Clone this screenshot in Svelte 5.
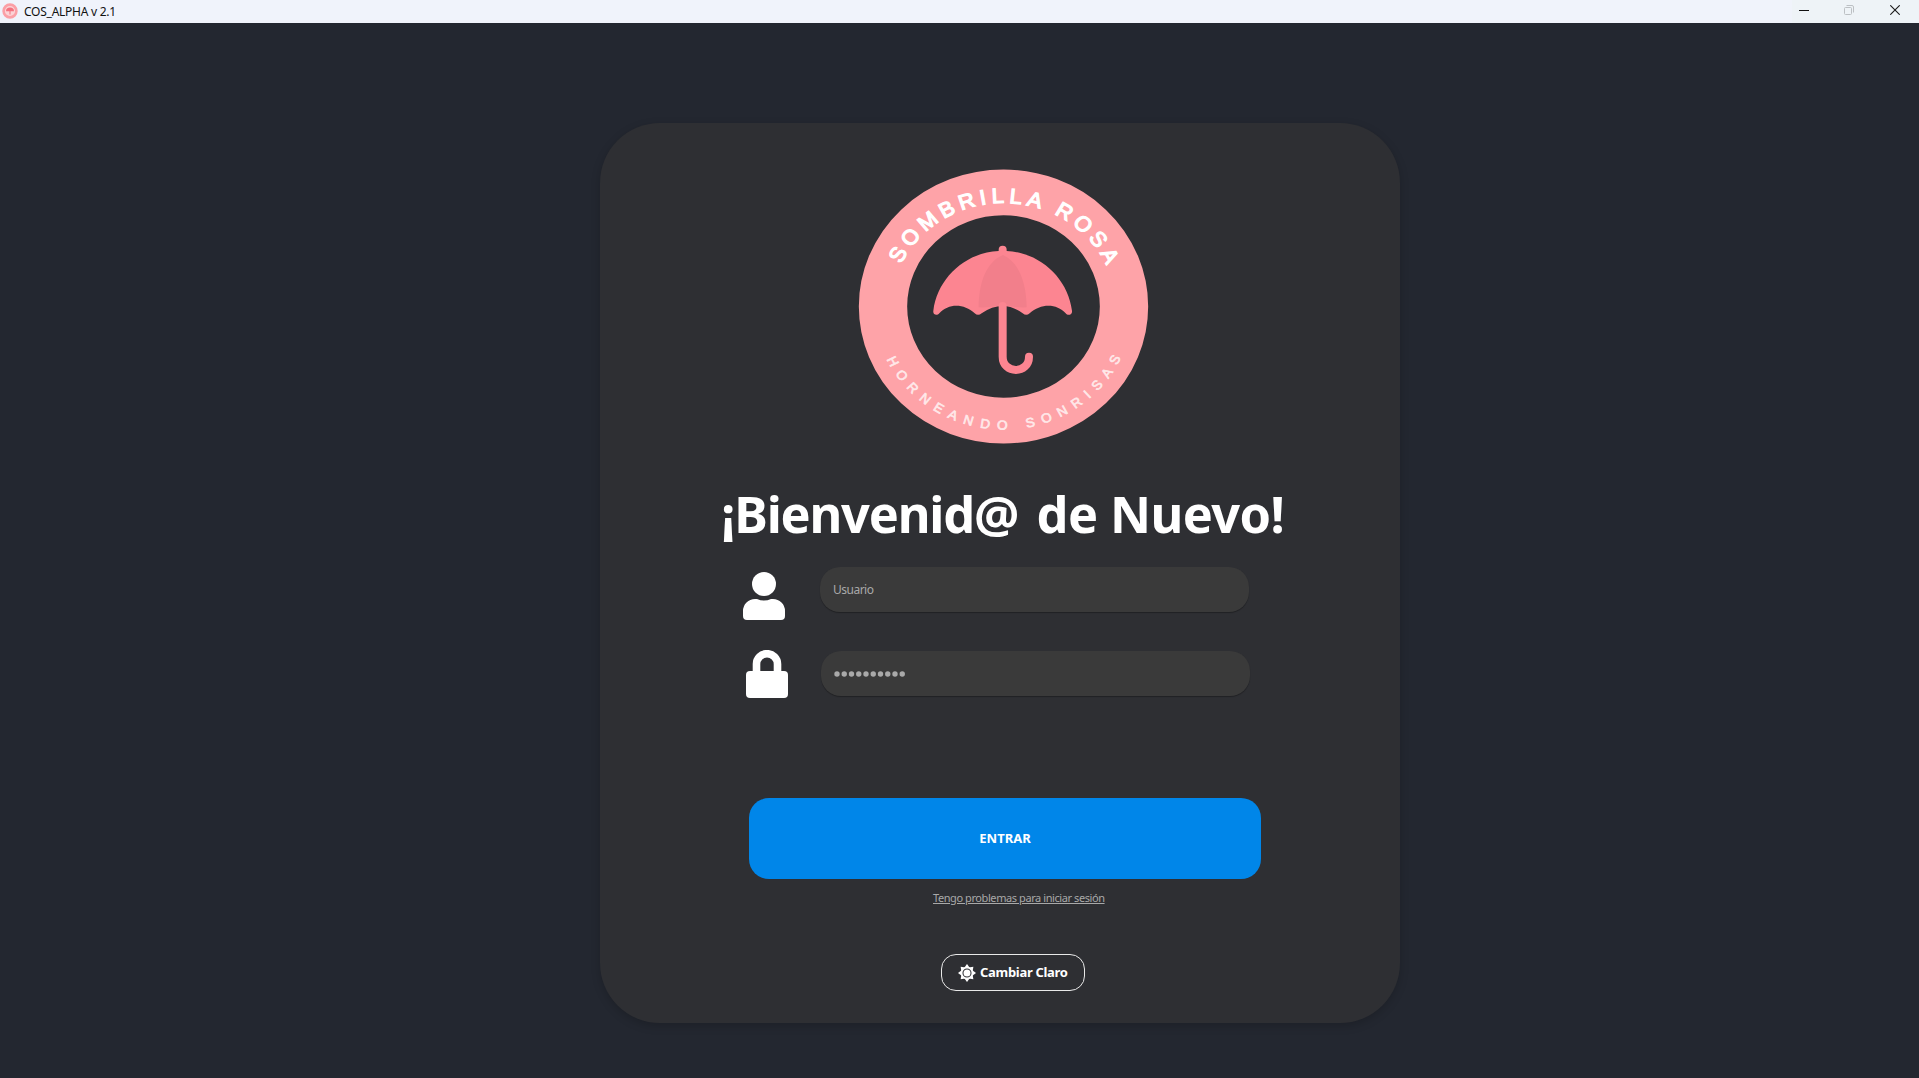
<script>
  const windowTitle = 'COS_ALPHA v 2.1';
  const dots = Array.from({ length: 10 }, (_, i) => i);
  const rays = Array.from({ length: 8 }, (_, i) => i * 45);
</script>

<div class="window">
  <header class="titlebar">
    <svg class="app-icon" viewBox="0 0 16 16">
      <circle cx="8" cy="8" r="6.4" fill="#fbd3d6" stroke="#fb9fa6" stroke-width="2.6" />
      <path d="M4 8.3a4 3.7 0 0 1 8 0zM7.5 8h1v3.6h-1z" fill="#f4727f" />
    </svg>
    <span class="title">{windowTitle}</span>
    <div class="controls">
      <svg viewBox="0 0 10 10"><path d="M0 5.5h10" stroke="#111" /></svg>
      <svg viewBox="0 0 10 10">
        <rect x=".5" y="2.5" width="7" height="7" rx="1" fill="none" stroke="#bcc0c4" />
        <path d="M2.5.5H8A1.5 1.5 0 0 1 9.5 2v5.500" fill="none" stroke="#bcc0c4" />
      </svg>
      <svg viewBox="0 0 10 10"><path d="M.3.3l9.400 9.400M9.700.3L.3 9.700" stroke="#1b1b1b" stroke-width="1.100" /></svg>
    </div>
  </header>

  <main class="card">
    <svg class="logo" viewBox="0 0 990 930">
      <defs>
        <path id="arc-top" d="M-336 0A336 328 0 0 1 336 0" />
        <path id="arc-bottom" d="M-388 0A388 390 0 0 0 388 0" />
      </defs>
      <g transform="translate(490.500 469.500) scale(1 .947)">
        <circle r="361.500" fill="none" stroke="#fea3a8" stroke-width="145" />
        <text class="arc name" text-anchor="middle"><textPath href="#arc-top" startOffset="50.200%" textLength="770">SOMBRILLA ROSA</textPath></text>
        <text class="arc motto" text-anchor="middle"><textPath href="#arc-bottom" startOffset="50.200%" textLength="882">HORNEANDO SONRISAS</textPath></text>
      </g>
      <path
        d="M476 303V299A12 12 0 0 1 500 299V303C600 307 684 385 696 482C698 494 684 499 677 490C650 460 602 460 569 490Q559 499 548 490Q518 468 488 468Q456 468 425 490Q414 499 404 490C372 460 325 460 298 490C290 499 278 494 280 482C292 385 376 307 476 303Z"
        fill="#fc8591"
      />
      <path d="M489 315C440 335 417 395 416 472Q450 473 470 468H505Q530 473 560 472C559 395 535 335 489 315Z" fill="#f27f8b" />
      <path d="M488 468V620C488 673 567 673 567 620" fill="none" stroke="#fc8591" stroke-width="24" stroke-linecap="round" />
    </svg>

    <h1><span class="tight">¡Bienvenid@</span> de Nuevo!</h1>

    <div class="row user-row">
      <svg class="icon" viewBox="0 0 42 48">
        <circle cx="21" cy="12" r="12" fill="#fff" />
        <path d="M12 27H14Q21 30 28 27H30A12 12 0 0 1 42 39V44A4 4 0 0 1 38 48H4A4 4 0 0 1 0 44V39A12 12 0 0 1 12 27Z" fill="#fff" />
      </svg>
      <div class="field"><span>Usuario</span></div>
    </div>

    <div class="row lock-row">
      <svg class="icon" viewBox="0 0 42 48">
        <rect y="21" width="42" height="27" rx="4" fill="#fff" />
        <path d="M10.500 24V14A10.500 10.300 0 0 1 31.500 14V24" fill="none" stroke="#fff" stroke-width="7.600" />
      </svg>
      <div class="field">
        <svg class="dots" viewBox="0 0 72 6">
          {#each dots as dot (dot)}<circle cx={3 + dot * 7.25} cy="3" r="2.700" fill="#a9a9a9" />{/each}
        </svg>
      </div>
    </div>

    <button class="enter">ENTRAR</button>
    <a class="help" href="#ayuda">Tengo problemas para iniciar sesión</a>
    <button class="theme">
      <svg viewBox="-9 -9 18 18">
        {#each rays as angle (angle)}
          <path d="M-2.900 -5L0 -9L2.900 -5Z" fill="#fff" transform="rotate({angle})" />
        {/each}
        <circle r="5.300" fill="#2e2f33" stroke="#fff" stroke-width="1.500" />
        <circle r="3.500" fill="#fff" />
      </svg>
      <span>Cambiar Claro</span>
    </button>
  </main>
</div>

<style>
  :global(body) { margin: 0; background: #232730; }
  .window {
    width: 1919px;
    height: 1078px;
    overflow: hidden;
    background: #232730;
    font-family: 'Noto Sans', 'Open Sans', sans-serif;
    color: #fff;
  }
  .titlebar {
    height: 23px;
    display: flex;
    align-items: center;
    box-sizing: border-box;
    padding-left: 2px;
    background: linear-gradient(90deg, #f0f3fb 1792px, #eef3f7 1792px);
    color: #111;
  }
  .app-icon { width: 16px; height: 16px; margin-top: -1px; }
  .title { margin: 1px 0 0 6px; font-size: 12px; line-height: 22px; letter-spacing: -0.25px; white-space: nowrap; }
  .controls { display: flex; margin: 0 19px 3px auto; }
  .controls svg { width: 10px; height: 10px; margin-left: 35px; }
  .controls svg:last-child { margin-left: 36px; }

  .card {
    width: 800px;
    height: 900px;
    margin: 100px 0 0 600px;
    box-sizing: border-box;
    padding-top: 27px;
    border-radius: 60px;
    background: #2e2f33;
    box-shadow: 0 3px 10px rgba(0, 0, 0, 0.18);
    display: flex;
    flex-direction: column;
    align-items: flex-start;
  }
  .logo { width: 330px; height: 310px; margin-left: 240px; flex: none; }
  .arc { font-family: 'Liberation Sans', sans-serif; fill: #fff; stroke: #fff; }
  .name { font-size: 66px; stroke-width: 4px; }
  .motto { font-size: 41px; fill: #ffe9ea; stroke: #ffe9ea; stroke-width: 2px; }
  h1 {
    margin: 19px 0 0 121px;
    font-size: 50.500px;
    line-height: 70px;
    font-weight: 700;
    letter-spacing: -0.6px;
    white-space: nowrap;
  }
  .tight { margin-right: 6px; letter-spacing: -1.200px; }
  .row { display: flex; align-items: flex-start; }
  .icon { width: 42px; height: 48px; flex: none; }
  .user-row { margin: 18px 0 0 143px; }
  .lock-row { margin: 30px 0 0 146px; }
  .user-row .icon { margin-top: 5px; }
  .user-row .field { margin-left: 35px; }
  .lock-row .field { margin: 1px 0 0 33px; }
  .field {
    width: 429px;
    height: 45px;
    box-sizing: border-box;
    padding-left: 13px;
    border-radius: 20px;
    background: #3a3a3a;
    box-shadow: 0 1px 1px rgba(0, 0, 0, 0.3);
    display: flex;
    align-items: center;
    color: #a9a9a9;
    font-size: 12px;
    letter-spacing: -0.5px;
  }
  .dots { width: 72px; height: 6px; margin-top: 1px; overflow: visible; }
  button { font-family: inherit; color: #fff; padding: 0; font-weight: 700; }
  .enter {
    width: 512px;
    height: 81px;
    margin: 100px 0 0 149px;
    padding-bottom: 2px;
    border: 0;
    border-radius: 20px;
    background: #0086e9;
    font-size: 13px;
  }
  .help {
    margin: 10px 0 0 333px;
    color: #a9a9a9;
    font-size: 11px;
    line-height: 18px;
    letter-spacing: -0.420px;
    text-underline-offset: 1px;
    white-space: nowrap;
  }
  .theme {
    width: 144px;
    height: 37px;
    margin: 47px 0 0 341px;
    padding-left: 16px;
    border: 1px solid #e9e9e9;
    border-radius: 15px;
    background: transparent;
    display: flex;
    align-items: center;
    gap: 4px;
    font-size: 13px;
    letter-spacing: -0.300px;
    white-space: nowrap;
  }
  .theme span { padding-bottom: 2px; }
  .theme svg { width: 18px; height: 18px; flex: none; }
</style>
